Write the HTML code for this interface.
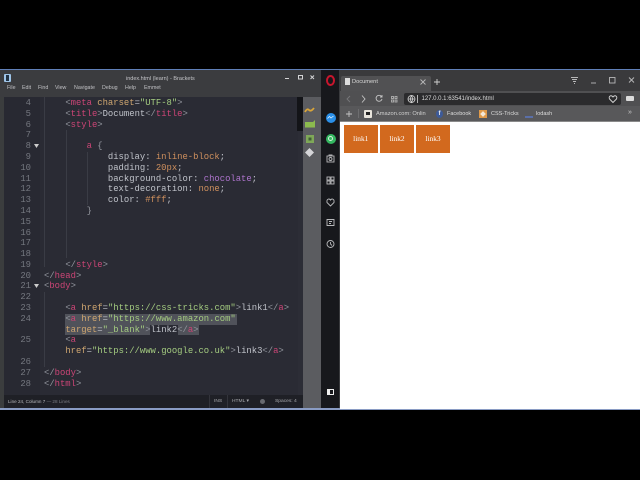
<!DOCTYPE html>
<html><head><meta charset="utf-8">
<style>
html,body{margin:0;padding:0;width:640px;height:480px;overflow:hidden;background:#000}
div,span{box-sizing:border-box}
#all{position:absolute;left:0;top:0;width:640px;height:480px;overflow:hidden;filter:blur(.35px)}
.a{position:absolute}
#code{position:absolute;left:0;top:.5px;font:8.9px/10.79px "Liberation Mono",monospace;color:#c0c3ca}
.r{position:absolute;left:44px;white-space:pre}
.n{position:absolute;width:31px;left:0;text-align:right;color:#74777f;font:8.9px/10.79px "Liberation Mono",monospace}
.t{color:#cc4576}.b{color:#92959d}.s{color:#a4cc80}.at{color:#cfa670}.v{color:#cf905e}.c{color:#ad74cc}.w{color:#c0c3ca}
.ui{font-family:"Liberation Sans",sans-serif;white-space:pre;position:absolute}
.g{position:absolute;width:1px;background:#3a3c45}
.sel{position:absolute;background:#50525a}
</style></head><body>
<div id="all">
<div class="a" style="left:0;top:69px;width:640px;height:1px;background:#5f7fb8"></div>
<div class="a" style="left:0;top:408px;width:640px;height:2px;background:#8a9cc4"></div>

<!-- Brackets -->
<div class="a" style="left:0;top:70px;width:321px;height:27px;background:#3b3c3f"></div>
<div class="a" style="left:4px;top:97px;width:294px;height:298px;background:#2a2b34"></div>
<div class="a" style="left:0;top:97px;width:4px;height:311px;background:#3b3d3e"></div>
<div class="a" style="left:4px;top:97px;width:36px;height:298px;background:#282932"></div>
<div class="a" style="left:298px;top:97px;width:5px;height:311px;background:#2c2d36"></div>
<div class="a" style="left:297px;top:97px;width:6px;height:34px;background:#131418"></div>
<div class="a" style="left:303px;top:97px;width:18px;height:311px;background:#5b5c60"></div>
<div class="a" style="left:4px;top:395px;width:299px;height:13px;background:#1f2026"></div>

<div class="a" style="left:4px;top:74px;width:7px;height:8px;background:#9ec4e8;border-radius:1px"></div>
<div class="a" style="left:6px;top:75px;width:3px;height:6px;background:#234"></div>
<div class="ui" style="left:126px;top:74.5px;font-size:5.5px;line-height:8px;color:#c4c5c8">index.html (learn) - Brackets</div>
<div class="ui" style="left:7px;top:84px;font-size:5.3px;line-height:8px;color:#c0c1c4">File</div>
<div class="ui" style="left:22px;top:84px;font-size:5.3px;line-height:8px;color:#c0c1c4">Edit</div>
<div class="ui" style="left:38px;top:84px;font-size:5.3px;line-height:8px;color:#c0c1c4">Find</div>
<div class="ui" style="left:55px;top:84px;font-size:5.3px;line-height:8px;color:#c0c1c4">View</div>
<div class="ui" style="left:74px;top:84px;font-size:5.3px;line-height:8px;color:#c0c1c4">Navigate</div>
<div class="ui" style="left:102px;top:84px;font-size:5.3px;line-height:8px;color:#c0c1c4">Debug</div>
<div class="ui" style="left:125px;top:84px;font-size:5.3px;line-height:8px;color:#c0c1c4">Help</div>
<div class="ui" style="left:144px;top:84px;font-size:5.3px;line-height:8px;color:#c0c1c4">Emmet</div>
<svg class="a" style="left:280px;top:70px" width="40" height="16" fill="none" stroke="#d4d4d6" stroke-width="1">
<path d="M5 8.500h4"/><rect x="18.500" y="5.500" width="4" height="3.500"/><path d="M30.500 5.500l3.500 3.500m0-3.500l-3.500 3.500"/></svg>

<!-- guides -->
<div class="g" style="left:44px;top:97px;height:170px"></div>
<div class="g" style="left:66px;top:130px;height:128px"></div>
<div class="g" style="left:87px;top:152px;height:53px"></div>
<div class="g" style="left:44px;top:292px;height:75px"></div>

<!-- selection -->
<div class="sel" style="left:65px;top:313.500px;width:172px;height:11px"></div>
<div class="sel" style="left:65px;top:324.500px;width:85px;height:10.500px"></div>
<div class="sel" style="left:178px;top:324.500px;width:21px;height:10.500px"></div>

<div id="code">
<div class="n" style="top:97.5px">4</div><div class="r" style="top:97.5px">    <span class="b">&lt;</span><span class="t">meta</span> <span class="at">charset</span><span class="w">=</span><span class="s">"UTF-8"</span><span class="b">&gt;</span></div>
<div class="n" style="top:108.3px">5</div><div class="r" style="top:108.3px">    <span class="b">&lt;</span><span class="t">title</span><span class="b">&gt;</span>Document<span class="b">&lt;/</span><span class="t">title</span><span class="b">&gt;</span></div>
<div class="n" style="top:119.1px">6</div><div class="r" style="top:119.1px">    <span class="b">&lt;</span><span class="t">style</span><span class="b">&gt;</span></div>
<div class="n" style="top:129.9px">7</div>
<div class="n" style="top:140.7px">8</div><div class="r" style="top:140.7px">        <span class="t">a</span> <span class="b">{</span></div>
<div class="n" style="top:151.5px">9</div><div class="r" style="top:151.5px">            display: <span class="v">inline-block</span>;</div>
<div class="n" style="top:162.2px">10</div><div class="r" style="top:162.2px">            padding: <span class="v">20px</span>;</div>
<div class="n" style="top:173px">11</div><div class="r" style="top:173px">            background-color: <span class="c">chocolate</span>;</div>
<div class="n" style="top:183.8px">12</div><div class="r" style="top:183.8px">            text-decoration: <span class="v">none</span>;</div>
<div class="n" style="top:194.6px">13</div><div class="r" style="top:194.6px">            color: <span class="v">#fff</span>;</div>
<div class="n" style="top:205.4px">14</div><div class="r" style="top:205.4px">        <span class="b">}</span></div>
<div class="n" style="top:216.2px">15</div>
<div class="n" style="top:227px">16</div>
<div class="n" style="top:237.7px">17</div>
<div class="n" style="top:248.5px">18</div>
<div class="n" style="top:259.3px">19</div><div class="r" style="top:259.3px">    <span class="b">&lt;/</span><span class="t">style</span><span class="b">&gt;</span></div>
<div class="n" style="top:270.1px">20</div><div class="r" style="top:270.1px"><span class="b">&lt;/</span><span class="t">head</span><span class="b">&gt;</span></div>
<div class="n" style="top:280.9px">21</div><div class="r" style="top:280.9px"><span class="b">&lt;</span><span class="t">body</span><span class="b">&gt;</span></div>
<div class="n" style="top:291.7px">22</div>
<div class="n" style="top:302.5px">23</div><div class="r" style="top:302.5px">    <span class="b">&lt;</span><span class="t">a</span> <span class="at">href</span><span class="w">=</span><span class="s">"https://css-tricks.com"</span><span class="b">&gt;</span>link1<span class="b">&lt;/</span><span class="t">a</span><span class="b">&gt;</span></div>
<div class="n" style="top:313.2px">24</div><div class="r" style="top:313.2px">    <span class="b">&lt;</span><span class="t">a</span> <span class="at">href</span><span class="w">=</span><span class="s">"https://www.amazon.com"</span></div>
<div class="r" style="top:324px">    <span class="at">target</span><span class="w">=</span><span class="s">"_blank"</span><span class="b">&gt;</span>link2<span class="b">&lt;/</span><span class="t">a</span><span class="b">&gt;</span></div>
<div class="n" style="top:334.8px">25</div><div class="r" style="top:334.8px">    <span class="b">&lt;</span><span class="t">a</span></div>
<div class="r" style="top:345.6px">    <span class="at">href</span><span class="w">=</span><span class="s">"https://www.google.co.uk"</span><span class="b">&gt;</span>link3<span class="b">&lt;/</span><span class="t">a</span><span class="b">&gt;</span></div>
<div class="n" style="top:356.4px">26</div>
<div class="n" style="top:367.2px">27</div><div class="r" style="top:367.2px"><span class="b">&lt;/</span><span class="t">body</span><span class="b">&gt;</span></div>
<div class="n" style="top:378px">28</div><div class="r" style="top:378px"><span class="b">&lt;/</span><span class="t">html</span><span class="b">&gt;</span></div>
</div>
<svg class="a" style="left:34px;top:143px" width="6" height="6"><path d="M0 1h5L2.500 5z" fill="#ccc"/></svg>
<svg class="a" style="left:34px;top:283px" width="6" height="6"><path d="M0 1h5L2.500 5z" fill="#ccc"/></svg>

<!-- Brackets right icons -->
<svg class="a" style="left:304px;top:104px" width="14" height="54">
<path d="M1 8q2-4 4-2t5-2" stroke="#d9a53a" stroke-width="1.800" fill="none"/>
<path d="M1 18h8l2-2v7.500H1z" fill="#8cbb4e"/>
<rect x="2" y="31" width="8" height="8" fill="#7fa858"/><rect x="4.500" y="33.500" width="3" height="3" fill="#3f5f35"/>
<path d="M5.500 44l4.500 4.500-4.500 4.500-4.500-4.500z" fill="#d5d5d8"/>
</svg>

<!-- status -->
<div class="ui" style="left:8px;top:398px;font-size:4.6px;line-height:7px;color:#b8b9bd">Line 24, Column 7 <span style="color:#7d7e84">— 28 Lines</span></div>
<div class="a" style="left:209px;top:395px;width:1px;height:13px;background:#33343b"></div>
<div class="ui" style="left:214px;top:398px;font-size:4.9px;line-height:7px;color:#a8a9ad">INS</div>
<div class="a" style="left:227px;top:395px;width:1px;height:13px;background:#33343b"></div>
<div class="ui" style="left:232px;top:398px;font-size:4.9px;line-height:7px;color:#a8a9ad">HTML ▾</div>
<div class="a" style="left:259.500px;top:399px;width:5px;height:5px;border-radius:50%;background:#686a70"></div>
<div class="ui" style="left:275px;top:398px;font-size:4.9px;line-height:7px;color:#a8a9ad">Spaces: 4</div>

<!-- Opera sidebar -->
<div class="a" style="left:321px;top:70px;width:18px;height:338px;background:#17181c"></div>
<div class="a" style="left:339px;top:70px;width:1px;height:338px;background:#3a3b3e"></div>
<div class="a" style="left:326px;top:75px;width:9px;height:11px;border:2px solid #c8162d;border-radius:50%"></div>
<div class="a" style="left:325.500px;top:112.500px;width:10px;height:10px;border-radius:50%;background:#2a8fe8"></div>
<svg class="a" style="left:327px;top:115px" width="7" height="5"><path d="M.5 3.500L2.500 1.500 4 3 6.500 1" stroke="#dff0ff" stroke-width=".8" fill="none"/></svg>
<div class="a" style="left:325.500px;top:133.500px;width:10px;height:10px;border-radius:50%;background:#34b760"></div>
<div class="a" style="left:328px;top:136px;width:5px;height:5px;border-radius:50%;border:1px solid #d8f0de"></div>
<svg class="a" style="left:324px;top:152px" width="14" height="100" fill="none" stroke="#b8b9bb" stroke-width=".9">
<rect x="3" y="4" width="7" height="6"/><circle cx="6.500" cy="7" r="1.500"/><path d="M5 4V3h3v1"/>
<rect x="3" y="25" width="3" height="3"/><rect x="7" y="25" width="3" height="3"/><rect x="3" y="29" width="3" height="3"/><rect x="7" y="29" width="3" height="3"/>
<path d="M6.500 54l-3.500-3.500q-.5-3 1.500-3.500 1.500 0 2 1 .5-1 2-1 2 .5 1.500 3.500z"/>
<path d="M3 67.500h7v6H3zM5 69.500h3M5 71.500h2"/>
<circle cx="6.500" cy="92" r="3.500"/><path d="M6.500 90v2l1.500 1.500"/>
</svg>
<div class="a" style="left:327px;top:389px;width:7px;height:6px;border:1px solid #eee;border-left-width:3px"></div>

<!-- Browser -->
<div class="a" style="left:340px;top:70px;width:300px;height:21px;background:#3a3a3c"></div>
<div class="a" style="left:341px;top:76px;width:90px;height:15px;background:#515153;border-radius:2px 2px 0 0"></div>
<div class="a" style="left:345px;top:78px;width:5px;height:7px;background:#dcdcdc"></div>
<div class="ui" style="left:352px;top:78px;font-size:5.7px;line-height:8px;color:#d8d8d8">Document</div>
<svg class="a" style="left:419px;top:78px" width="8" height="8" stroke="#b8b8b8" stroke-width=".9"><path d="M1.500 1.500l5 5m0-5l-5 5"/></svg>
<svg class="a" style="left:433px;top:78px" width="8" height="8" stroke="#d0d0d0" stroke-width=".9"><path d="M4 1v6M1 4h6"/></svg>
<svg class="a" style="left:568px;top:75px" width="72" height="12" fill="none" stroke="#b8b8b9" stroke-width=".9">
<path d="M3 2.500h7M4 4.500h5M5 6.500h3M6 8.500h1"/><path d="M23 8h5"/><rect x="41.500" y="2.500" width="5.500" height="5.500"/><path d="M61 2.500l5 5m0-5l-5 5"/>
</svg>

<div class="a" style="left:340px;top:91px;width:300px;height:15px;background:#505052"></div>
<div class="a" style="left:340px;top:106px;width:300px;height:16px;background:#58585a"></div>
<div class="a" style="left:340px;top:121px;width:300px;height:1px;background:#8a8a8a"></div>
<svg class="a" style="left:344px;top:93px" width="66" height="12" fill="none" stroke-width=".9">
<path d="M6 3L3 6l3 3" stroke="#77777a"/><path d="M18 2.500l3 3.500-3 3.500" stroke="#c4c4c4"/>
<path d="M37.500 3.500a3 3 0 1 0 .5 2.500M38 2v2h-2" stroke="#c4c4c4"/>
<rect x="47.500" y="3.500" width="2" height="2" stroke="#b0b0b0"/><rect x="51" y="3.500" width="2" height="2" stroke="#b0b0b0"/><rect x="47.500" y="7" width="2" height="2" stroke="#b0b0b0"/><rect x="51" y="7" width="2" height="2" stroke="#b0b0b0"/>
</svg>
<div class="a" style="left:404px;top:93px;width:217px;height:11.500px;background:#2b2b2d;border-radius:2px"></div>
<svg class="a" style="left:406px;top:94px" width="12" height="10" fill="none" stroke="#d8d8d8" stroke-width=".8"><circle cx="5.500" cy="5" r="3.500"/><path d="M2 5h7M5.500 1.500q-2 3.500 0 7q2-3.500 0-7"/><path d="M11.500 1v8"/></svg>
<div class="ui" style="left:421.500px;top:95px;font-size:6px;line-height:8px;color:#dcdcdc">127.0.0.1:63541/index.html</div>
<svg class="a" style="left:608px;top:94px" width="10" height="10" fill="none" stroke="#d8d8d8" stroke-width=".9"><path d="M5 8.500L1.500 5Q.5 2.500 2.500 1.800 4 1.500 5 3 6 1.500 7.500 1.800 9.500 2.500 8.500 5z"/></svg>
<div class="a" style="left:626px;top:96px;width:8px;height:5px;background:#dcdcdc;border-radius:1px"></div>

<svg class="a" style="left:345px;top:110px" width="8" height="8" stroke="#c4c4c4" stroke-width=".9"><path d="M4 1v6M1 4h6"/></svg>
<div class="a" style="left:358px;top:109px;width:1px;height:9px;background:#6d6d6f"></div>
<div class="a" style="left:364px;top:110px;width:8px;height:8px;background:#e8e4dc;border-radius:1px"></div>
<div class="a" style="left:366px;top:112px;width:4px;height:3px;background:#222"></div>
<div class="ui" style="left:376px;top:110px;font-size:5.700px;line-height:8px;color:#d0d0d0">Amazon.com: Onlin</div>
<div class="a" style="left:436px;top:110px;width:7px;height:8px;background:#3d5a98;border-radius:50%"></div>
<div class="ui" style="left:438.500px;top:110px;font-size:6px;line-height:8px;color:#f0f0f0;font-weight:bold">f</div>
<div class="ui" style="left:447px;top:110px;font-size:5.500px;line-height:8px;color:#dedede">Facebook</div>
<div class="a" style="left:479px;top:110px;width:8px;height:8px;background:#e09a4a"></div>
<div class="a" style="left:481px;top:112px;width:4px;height:4px;background:#f4e8d8;transform:rotate(45deg)"></div>
<div class="ui" style="left:491px;top:110px;font-size:5.500px;line-height:8px;color:#dedede">CSS-Tricks</div>
<div class="a" style="left:525px;top:116px;width:8px;height:1.500px;background:#5a6fa8"></div>
<div class="ui" style="left:536px;top:110px;font-size:5.500px;line-height:8px;color:#dedede">lodash</div>
<div class="ui" style="left:628px;top:109px;font-size:7px;line-height:8px;color:#c8c8c8">»</div>

<!-- Page -->
<div class="a" style="left:340px;top:122px;width:300px;height:287px;background:#fff"></div>
<div class="a" style="left:343.500px;top:125px;width:34.500px;height:27.500px;background:#d2691e"></div>
<div class="a" style="left:380px;top:125px;width:34px;height:27.500px;background:#d2691e"></div>
<div class="a" style="left:416px;top:125px;width:34px;height:27.500px;background:#d2691e"></div>
<div class="ui" style="left:343.500px;width:34.500px;text-align:center;top:134px;font:7.400px/10px 'Liberation Serif',serif;color:#fff">link1</div>
<div class="ui" style="left:380px;width:34px;text-align:center;top:134px;font:7.400px/10px 'Liberation Serif',serif;color:#fff">link2</div>
<div class="ui" style="left:416px;width:34px;text-align:center;top:134px;font:7.400px/10px 'Liberation Serif',serif;color:#fff">link3</div>
</div>
</body></html>
